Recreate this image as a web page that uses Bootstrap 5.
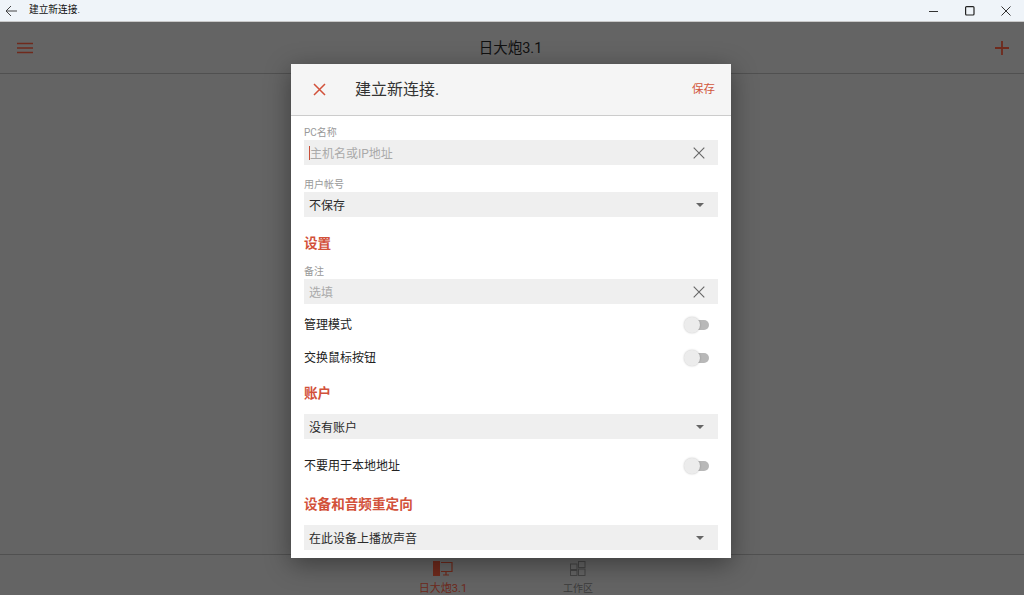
<!DOCTYPE html>
<html lang="zh">
<head>
<meta charset="utf-8">
<title>建立新连接.</title>
<link href="https://cdn.jsdelivr.net/npm/bootstrap@5.3.0/dist/css/bootstrap.min.css" rel="stylesheet">
<style>
html,body{height:595px;overflow:hidden;margin:0}
body{font-family:"Roboto","Noto Sans CJK SC",sans-serif;font-size:12px;color:#222;background:#646464}
svg{display:block}
.app-win{height:595px;position:relative}
.title-strip{height:22px;background:#eff4f9;border-bottom:1px solid #c9c9c9;font-size:9.7px;color:#111}
.back-ico{margin:0 11px 0 5px}
.win-btn{width:36px;height:21px}
.backdrop-body{height:573px;background:#646464}
.top-head{height:52px;border-bottom:1px solid #505050;padding:3px 14px 0 17px;font-size:14.5px;color:#111}
.top-head svg{margin-top:-3px}
.head-name{margin-right:6px}
.main-gap{flex:1}
.bottom-tabs{height:41px;border-top:1px solid #505050;padding:6px 3px 0 0;gap:75px;font-size:10px;line-height:13px;color:#3c3c3c;overflow:hidden}
.tab-active{color:#6f2a1c;font-size:11px}
.tab-item{width:60px}
.tab-item svg{margin-bottom:6px}
.dialog-box{position:absolute;left:291px;top:64px;width:440px;height:494px;background:#fff;box-shadow:0 6px 24px rgba(0,0,0,.4);overflow:hidden}
.dialog-head{height:52px;background:#f5f5f5;border-bottom:1px solid #ccc;padding:0 16px 0 22px;font-size:16px;color:#333}
.dialog-title{margin-left:29px;flex:1}
.save-link{font-size:11.5px;color:#d2573c}
.dialog-body{padding:0 13px}
.mini-label{font-size:10px;line-height:11px;color:#999;height:13px}
.entry-box{height:25px;background:#efefef;padding:0 13px 0 5px;font-size:12px;line-height:25px;color:#2a2a2a}
.entry-text{padding-top:3px}
.hint-text{color:#aaa}
.caret-line{width:1px;height:14px;background:#c9503a}
.tri-down{width:0;height:0;border-left:4.5px solid transparent;border-right:4.5px solid transparent;border-top:4.5px solid #666;margin-right:1px}
.sec-title{font-size:13.6px;font-weight:700;color:#d2513a;line-height:20px}
.opt-row{font-size:12px;line-height:18px;color:#222;padding-right:9px}
.switch-ico{position:relative;width:25px;height:16px}
.switch-track{position:absolute;right:0;top:3px;width:18px;height:10px;border-radius:5px;background:#b8b8b8}
.switch-knob{position:absolute;left:0;top:0;width:16px;height:16px;border-radius:50%;background:#ececec;box-shadow:0 0 2px rgba(0,0,0,.25)}
.mt-first{margin-top:11px}.mt-label{margin-top:14px}.mt-sec1{margin-top:16px}.mt-note{margin-top:13px}
.mt-opt1{margin-top:12px}.mt-opt2{margin-top:15px}.mt-sec2{margin-top:16px}.mt-field{margin-top:11px}
.mt-opt3{margin-top:18px}.mt-sec3{margin-top:19px}
</style>
</head>
<body>
<div class="app-win d-flex flex-column">
  <div class="title-strip d-flex align-items-center">
    <svg class="back-ico" width="13" height="12" viewBox="0 0 13 12" fill="none" stroke="#444" stroke-width="1"><path d="M12 6H1.2M6 1 1 6l5 5"/></svg>
    <span>建立新连接.</span>
    <div class="d-flex ms-auto">
      <div class="win-btn d-flex align-items-center justify-content-center"><svg width="10" height="10" viewBox="0 0 10 10" stroke="#333" fill="none"><path d="M0 5.5h9"/></svg></div>
      <div class="win-btn d-flex align-items-center justify-content-center"><svg width="10" height="10" viewBox="0 0 10 10" stroke="#222" fill="none" stroke-width="1.2"><rect x=".6" y=".6" width="8.4" height="8.4" rx="1"/></svg></div>
      <div class="win-btn d-flex align-items-center justify-content-center"><svg width="10" height="10" viewBox="0 0 10 10" stroke="#333" fill="none"><path d="m.5.5 9 9m0-9-9 9"/></svg></div>
    </div>
  </div>
  <div class="backdrop-body d-flex flex-column">
    <div class="top-head d-flex align-items-center justify-content-between">
      <svg width="16" height="12" viewBox="0 0 16 12" stroke="#6f2a1c" stroke-width="1.6" fill="none"><path d="M0 1.5h16M0 6h16M0 10.5h16"/></svg>
      <span class="head-name">日大炮3.1</span>
      <svg width="16" height="16" viewBox="0 0 16 16" stroke="#6f2a1c" stroke-width="1.8" fill="none"><path d="M8 1v14M1 8h14"/></svg>
    </div>
    <div class="main-gap"></div>
    <div class="bottom-tabs d-flex justify-content-center">
      <div class="tab-item tab-active d-flex flex-column align-items-center">
        <svg width="20" height="15" viewBox="0 0 20 15" fill="none" stroke="#6f2a1c" stroke-width="1.2"><rect x="0" y="0" width="7" height="15" fill="#6f2a1c" stroke="none"/><path d="M8 1.5h11v9H8M13 10.5V14M10 14h6"/></svg>
        <span>日大炮3.1</span>
      </div>
      <div class="tab-item d-flex flex-column align-items-center">
        <svg width="16" height="15" viewBox="0 0 16 15" fill="none" stroke="#444" stroke-width="1"><rect x=".5" y="3" width="6.5" height="5.5"/><rect x="8.5" y=".5" width="6.5" height="6"/><rect x=".5" y="9.5" width="6.5" height="5"/><rect x="8.5" y="8" width="6.5" height="6.5"/></svg>
        <span>工作区</span>
      </div>
    </div>
  </div>

  <div class="dialog-box">
    <div class="dialog-head d-flex align-items-center">
      <svg width="13" height="13" viewBox="0 0 13 13" stroke="#d2513a" stroke-width="1.5" fill="none"><path d="m1 1 11 11m0-11L1 12"/></svg>
      <span class="dialog-title">建立新连接.</span>
      <span class="save-link">保存</span>
    </div>
    <div class="dialog-body">
      <div class="mini-label mt-first">PC名称</div>
      <div class="entry-box d-flex align-items-center">
        <span class="caret-line"></span><span class="entry-text hint-text flex-grow-1">主机名或IP地址</span>
        <svg width="12" height="12" viewBox="0 0 12 12" stroke="#666" fill="none" stroke-width="1.1"><path d="m.7.7 10.6 10.6m0-10.6L.7 11.3"/></svg>
      </div>
      <div class="mini-label mt-label">用户帐号</div>
      <div class="entry-box d-flex align-items-center justify-content-between">
        <span class="entry-text">不保存</span><span class="tri-down"></span>
      </div>
      <div class="sec-title mt-sec1">设置</div>
      <div class="mini-label mt-note">备注</div>
      <div class="entry-box d-flex align-items-center justify-content-between">
        <span class="entry-text hint-text">选填</span>
        <svg width="12" height="12" viewBox="0 0 12 12" stroke="#666" fill="none" stroke-width="1.1"><path d="m.7.7 10.6 10.6m0-10.6L.7 11.3"/></svg>
      </div>
      <div class="opt-row mt-opt1 d-flex align-items-center justify-content-between">
        <span>管理模式</span><span class="switch-ico"><span class="switch-track"></span><span class="switch-knob"></span></span>
      </div>
      <div class="opt-row mt-opt2 d-flex align-items-center justify-content-between">
        <span>交换鼠标按钮</span><span class="switch-ico"><span class="switch-track"></span><span class="switch-knob"></span></span>
      </div>
      <div class="sec-title mt-sec2">账户</div>
      <div class="entry-box mt-field d-flex align-items-center justify-content-between">
        <span class="entry-text">没有账户</span><span class="tri-down"></span>
      </div>
      <div class="opt-row mt-opt3 d-flex align-items-center justify-content-between">
        <span>不要用于本地地址</span><span class="switch-ico"><span class="switch-track"></span><span class="switch-knob"></span></span>
      </div>
      <div class="sec-title mt-sec3">设备和音频重定向</div>
      <div class="entry-box mt-field d-flex align-items-center justify-content-between">
        <span class="entry-text">在此设备上播放声音</span><span class="tri-down"></span>
      </div>
    </div>
  </div>
</div>
<script src="https://cdn.jsdelivr.net/npm/bootstrap@5.3.0/dist/js/bootstrap.bundle.min.js"></script>
</body>
</html>
